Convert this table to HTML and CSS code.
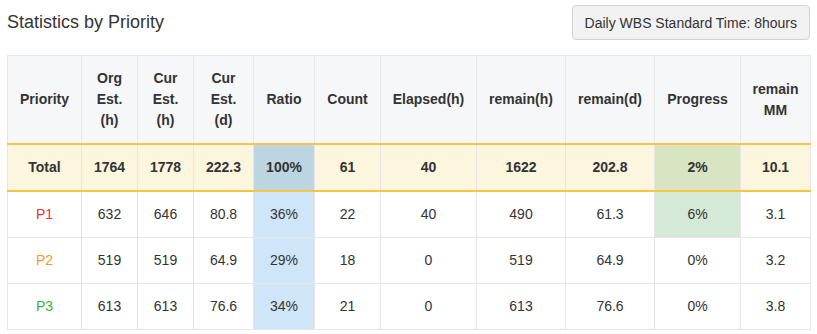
FILE: index.html
```html
<!DOCTYPE html>
<html>
<head>
<meta charset="utf-8">
<link rel="stylesheet" href="styles.css">
</head>
<body>
<div class="page">
  <div class="topbar">
    <h2 class="title">Statistics by Priority</h2>
    <button class="std-btn">Daily WBS Standard Time: 8hours</button>
  </div>
  <table class="stats">
    <colgroup>
      <col class="c1"><col class="c2"><col class="c3"><col class="c4"><col class="c5"><col class="c6">
      <col class="c7"><col class="c8"><col class="c9"><col class="c10"><col class="c11">
    </colgroup>
    <thead>
      <tr>
        <th>Priority</th>
        <th>Org<br>Est.<br>(h)</th>
        <th>Cur<br>Est.<br>(h)</th>
        <th>Cur<br>Est.<br>(d)</th>
        <th>Ratio</th>
        <th>Count</th>
        <th>Elapsed(h)</th>
        <th>remain(h)</th>
        <th>remain(d)</th>
        <th>Progress</th>
        <th>remain<br>MM</th>
      </tr>
    </thead>
    <tbody>
      <tr class="total">
        <td>Total</td><td>1764</td><td>1778</td><td>222.3</td><td class="ratio">100%</td><td>61</td><td>40</td><td>1622</td><td>202.8</td><td class="prog">2%</td><td>10.1</td>
      </tr>
      <tr>
        <td class="p1">P1</td><td>632</td><td>646</td><td>80.8</td><td class="ratio">36%</td><td>22</td><td>40</td><td>490</td><td>61.3</td><td class="prog">6%</td><td>3.1</td>
      </tr>
      <tr>
        <td class="p2">P2</td><td>519</td><td>519</td><td>64.9</td><td class="ratio">29%</td><td>18</td><td>0</td><td>519</td><td>64.9</td><td>0%</td><td>3.2</td>
      </tr>
      <tr>
        <td class="p3">P3</td><td>613</td><td>613</td><td>76.6</td><td class="ratio">34%</td><td>21</td><td>0</td><td>613</td><td>76.6</td><td>0%</td><td>3.8</td>
      </tr>
    </tbody>
  </table>
</div>
</body>
</html>
```
FILE: styles.css
```css
html, body {
  margin: 0;
  padding: 0;
  background: #fff;
}
body {
  font-family: "Liberation Sans", Arial, Helvetica, sans-serif;
  color: #333;
  font-size: 14px;
}
.page {
  padding: 5px 7px 0 7px;
}
.topbar {
  display: flex;
  justify-content: space-between;
  align-items: center;
  height: 35px;
}
.title {
  margin: 0;
  font-size: 18px;
  font-weight: normal;
  color: #333;
}
.std-btn {
  font-family: inherit;
  font-size: 14px;
  color: #333;
  background: #f2f2f2;
  border: 1px solid #d4d4d4;
  border-radius: 4px;
  height: 35px;
  padding: 0 12px;
  line-height: 20px;
  white-space: nowrap;
}
.stats {
  margin-top: 15px;
  width: 803px;
  table-layout: fixed;
  border-collapse: collapse;
  font-size: 14px;
}
.c1 { width: 74px; }
.c2 { width: 56px; }
.c3 { width: 56px; }
.c4 { width: 60px; }
.c5 { width: 61px; }
.c6 { width: 66px; }
.c7 { width: 96px; }
.c8 { width: 89px; }
.c9 { width: 89px; }
.c10 { width: 86px; }
.c11 { width: 70px; }
.stats th,
.stats td {
  border: 1px solid #e6e6e6;
  padding: 12px 4px;
  line-height: 21px;
  text-align: center;
  vertical-align: middle;
}
.stats th {
  background: #f6f7f9;
  font-weight: bold;
  color: #333;
}
.stats tr.total td {
  background: #fdf6de;
  font-weight: bold;
  border-top: 2px solid #f8c543;
  border-bottom: 2px solid #f8c543;
  padding: 12px 4px;
}
.stats td.ratio {
  background: #cfe5f8;
}
.stats tr.total td.ratio {
  background: #bcd5e1;
}
.stats td.prog {
  background: #d4e9d6;
}
.stats tr.total td.prog {
  background: #d9e4c2;
}
.p1 { color: #e8313b; }
.p2 { color: #f39a2a; }
.p3 { color: #3cb43a; }
```
